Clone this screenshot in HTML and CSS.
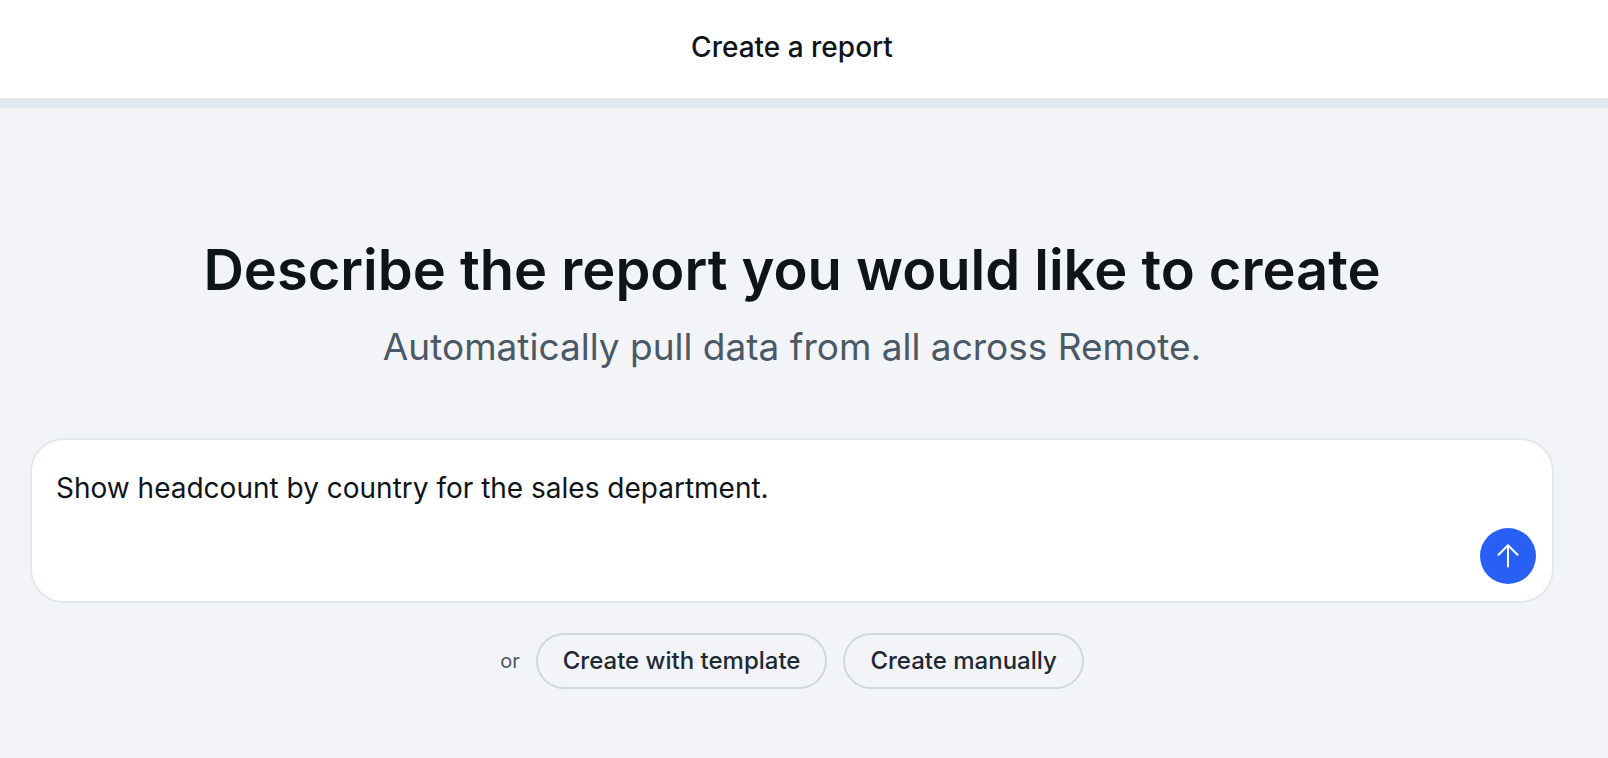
FILE: index.html
```
<!DOCTYPE html>
<html lang="en">
  <head>
    <meta charset="UTF-8" />
    <meta name="viewport" content="width=device-width, initial-scale=1.0" />
    <title>Create a report</title>
    <link rel="stylesheet" href="styles.css">
  </head>
  <body>
    <header class="topbar">
      <h1 class="topbar-title">Create a report</h1>
    </header>
    <main class="content">
      <h2 class="heading">Describe the report you would like to create</h2>
      <p class="subheading">Automatically pull data from all across Remote.</p>
      <form class="prompt">
        <textarea class="prompt-input" aria-label="Report description" rows="2">Show headcount by country for the sales department.</textarea>
        <button class="send" type="button" aria-label="Send">
          <svg width="24" height="24" viewBox="0 0 24 24" fill="none" stroke="currentColor" stroke-width="2" stroke-linecap="round" stroke-linejoin="round">
            <path d="M12 22.500V1.200M2.500 10.800L12 1.200l9.500 9.600" />
          </svg>
        </button>
      </form>
      <div class="options">
        <span class="or">or</span>
        <button class="option" type="button">Create with template</button>
        <button class="option" type="button">Create manually</button>
      </div>
    </main>
  </body>
</html>
```
FILE: styles.css
```
* {
  box-sizing: border-box;
}
body {
  margin: 0;
  min-height: 100vh;
  background: #f2f4f8;
  color: #0f1419;
  font-family: Inter, sans-serif;
}
.topbar {
  padding: 27px 54px 31px 30px;
  background: #fff;
  border-bottom: 10px solid #e2e8ef;
  text-align: center;
}
.topbar-title {
  margin: 0;
  font-size: 28px;
  font-weight: 500;
  line-height: 40px;
}
.content {
  padding: 128px 54px 60px 30px;
  text-align: center;
}
.heading {
  margin: 0;
  font-size: 56px;
  font-weight: 600;
  line-height: 68px;
}
.subheading {
  margin: 20px 0 68px;
  color: #4b5865;
  font-size: 37px;
  line-height: 46px;
}
.prompt {
  display: flex;
  align-items: flex-end;
  height: 165px;
  padding: 14px 16px 17px 24px;
  background: #fff;
  border: 2px solid #e2e8ef;
  border-radius: 34px;
}
.prompt-input {
  flex: 1;
  align-self: stretch;
  padding: 14px 0;
  border: 0;
  outline: 0;
  resize: none;
  background: transparent;
  color: inherit;
  font: inherit;
  font-size: 28px;
  line-height: 40px;
}
.send {
  display: flex;
  align-items: center;
  justify-content: center;
  width: 56px;
  height: 56px;
  padding: 0;
  border: 0;
  border-radius: 50%;
  background: #2860f6;
  color: #fff;
  cursor: pointer;
}
.options {
  display: flex;
  align-items: center;
  justify-content: center;
  gap: 16px;
  margin-top: 30px;
}
.or {
  color: #4b5865;
  font-size: 20px;
}
.option {
  height: 56px;
  padding: 0 25px 2px;
  border: 2px solid #cfd7df;
  border-radius: 28px;
  background: transparent;
  color: #1f2933;
  font: inherit;
  font-size: 24px;
  font-weight: 500;
  cursor: pointer;
}
```
